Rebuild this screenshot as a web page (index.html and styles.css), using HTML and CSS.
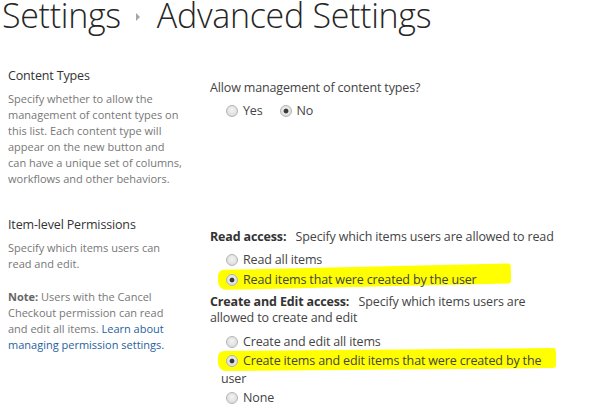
FILE: index.html
```html
<!DOCTYPE html>
<html lang="en">
<head>
<meta charset="utf-8">
<title>Advanced Settings</title>
<link rel="stylesheet" href="styles.css">
</head>
<body>
<h1 class="title">Settings<span class="crumb-arrow" aria-hidden="true"></span>Advanced Settings</h1>

<div class="section section-first">
  <div class="section-info">
    <h3 class="section-heading">Content Types</h3>
    <p class="section-desc">Specify whether to allow the<br>management of content types on<br>this list. Each content type will<br>appear on the new button and<br>can have a unique set of columns,<br>workflows and other behaviors.</p>
  </div>
  <div class="section-body">
    <div class="field-label">Allow management of content types?</div>
    <div class="options options-inline">
      <label class="option"><input type="radio" name="ct" class="radio"><span>Yes</span></label>
      <label class="option"><input type="radio" name="ct" class="radio" checked><span>No</span></label>
    </div>
  </div>
</div>

<div class="section">
  <div class="section-info">
    <h3 class="section-heading">Item-level Permissions</h3>
    <p class="section-desc">Specify which items users can<br>read and edit.</p>
    <p class="section-desc note"><b class="note-label">Note:</b> Users with the Cancel<br>Checkout permission can read<br>and edit all items. <a class="link" href="#">Learn about<br>managing permission settings.</a></p>
  </div>
  <div class="section-body">
    <div class="field-label"><b class="strong">Read access:</b>&nbsp;&nbsp; Specify which items users are allowed to read</div>
    <div class="options">
      <label class="option"><input type="radio" name="ra" class="radio"><span>Read all items</span></label>
      <label class="option marked"><input type="radio" name="ra" class="radio" checked><span>Read items that were created by the user</span></label>
    </div>
    <div class="field-label field-label-second"><b class="strong">Create and Edit access:</b>&nbsp;&nbsp; Specify which items users are<br>allowed to create and edit</div>
    <div class="options options-edit">
      <label class="option"><input type="radio" name="ea" class="radio"><span>Create and edit all items</span></label>
      <label class="option marked marked-wide"><input type="radio" name="ea" class="radio" checked><span>Create items and edit items that were created by the<br>user</span></label>
      <label class="option"><input type="radio" name="ea" class="radio"><span>None</span></label>
    </div>
  </div>
</div>
</body>
</html>
```

FILE: styles.css
```css
html, body {
  margin: 0;
  padding: 0;
  background: #ffffff;
}

body {
  font-family: "Open Sans", "Noto Sans", "Liberation Sans", sans-serif;
  font-size: 12.5px;
  line-height: 16px;
  color: #444444;
}

.title {
  margin: 0;
  padding-left: 2px;
  font-family: "Open Sans", "Noto Sans", sans-serif;
  font-weight: 300;
  font-size: 34px;
  line-height: 30px;
  color: #262626;
  letter-spacing: -0.3px;
  white-space: nowrap;
}

.crumb-arrow {
  display: inline-block;
  width: 0;
  height: 0;
  margin: 0 17px 0 15px;
  border-top: 4px solid transparent;
  border-bottom: 4px solid transparent;
  border-left: 4px solid #a6a6a6;
  vertical-align: 7px;
}

.section {
  display: grid;
  grid-template-columns: 202px 1fr;
  padding-left: 8px;
  margin-top: 28px;
}

.section-first {
  margin-top: 36px;
}

.section-heading {
  margin: 1px 0 6px;
  font-size: 12.5px;
  font-weight: 400;
  line-height: 18px;
  letter-spacing: -0.15px;
  color: #333333;
}

.section-desc {
  margin: 0;
  font-size: 11px;
  color: #777777;
  white-space: nowrap;
}

.note {
  margin-top: 17px;
}

.note-label {
  font-weight: 700;
  color: #666666;
}

.link {
  color: #1f5f9e;
  text-decoration: none;
}

.section-body {
  padding-top: 14px;
  white-space: nowrap;
  letter-spacing: -0.15px;
}

.field-label {
  color: #444444;
}

.strong {
  font-weight: 700;
  color: #333333;
}

.field-label-second {
  margin-top: 4px;
}

.options {
  margin-top: 5px;
  padding-left: 11px;
}

.options-inline {
  display: flex;
  gap: 12px;
}

.options-edit {
  margin-top: 6px;
}

.option {
  position: relative;
  display: block;
  min-height: 20px;
  line-height: 20px;
  color: #444444;
}

.options-inline .option {
  display: inline-block;
}

.option > span {
  position: relative;
}

.radio {
  position: relative;
  -webkit-appearance: none;
  appearance: none;
  box-sizing: border-box;
  width: 12px;
  height: 12px;
  margin: 0 5px 0 5px;
  border: 1px solid #b4b4b4;
  border-radius: 50%;
  background: radial-gradient(circle at 50% 40%, #f3f3f3 0, #d6d6d6 100%);
  vertical-align: -2px;
}

.radio:checked {
  background:
    radial-gradient(circle, #3a3a3a 0, #3a3a3a 2px, rgba(0,0,0,0) 2.8px),
    radial-gradient(circle at 50% 40%, #f3f3f3 0, #d6d6d6 100%);
}

.marked-wide {
  line-height: 18px;
}

.marked::before {
  content: "";
  position: absolute;
  left: -3px;
  top: 0;
  height: 20px;
  width: 293px;
  background: #ffff00;
  border-radius: 6px 3px 3px 8px;
  transform: rotate(-1.3deg);
  transform-origin: left center;
}

.marked-wide::before {
  width: 338px;
  top: -1px;
  transform: rotate(-0.5deg);
}
```
